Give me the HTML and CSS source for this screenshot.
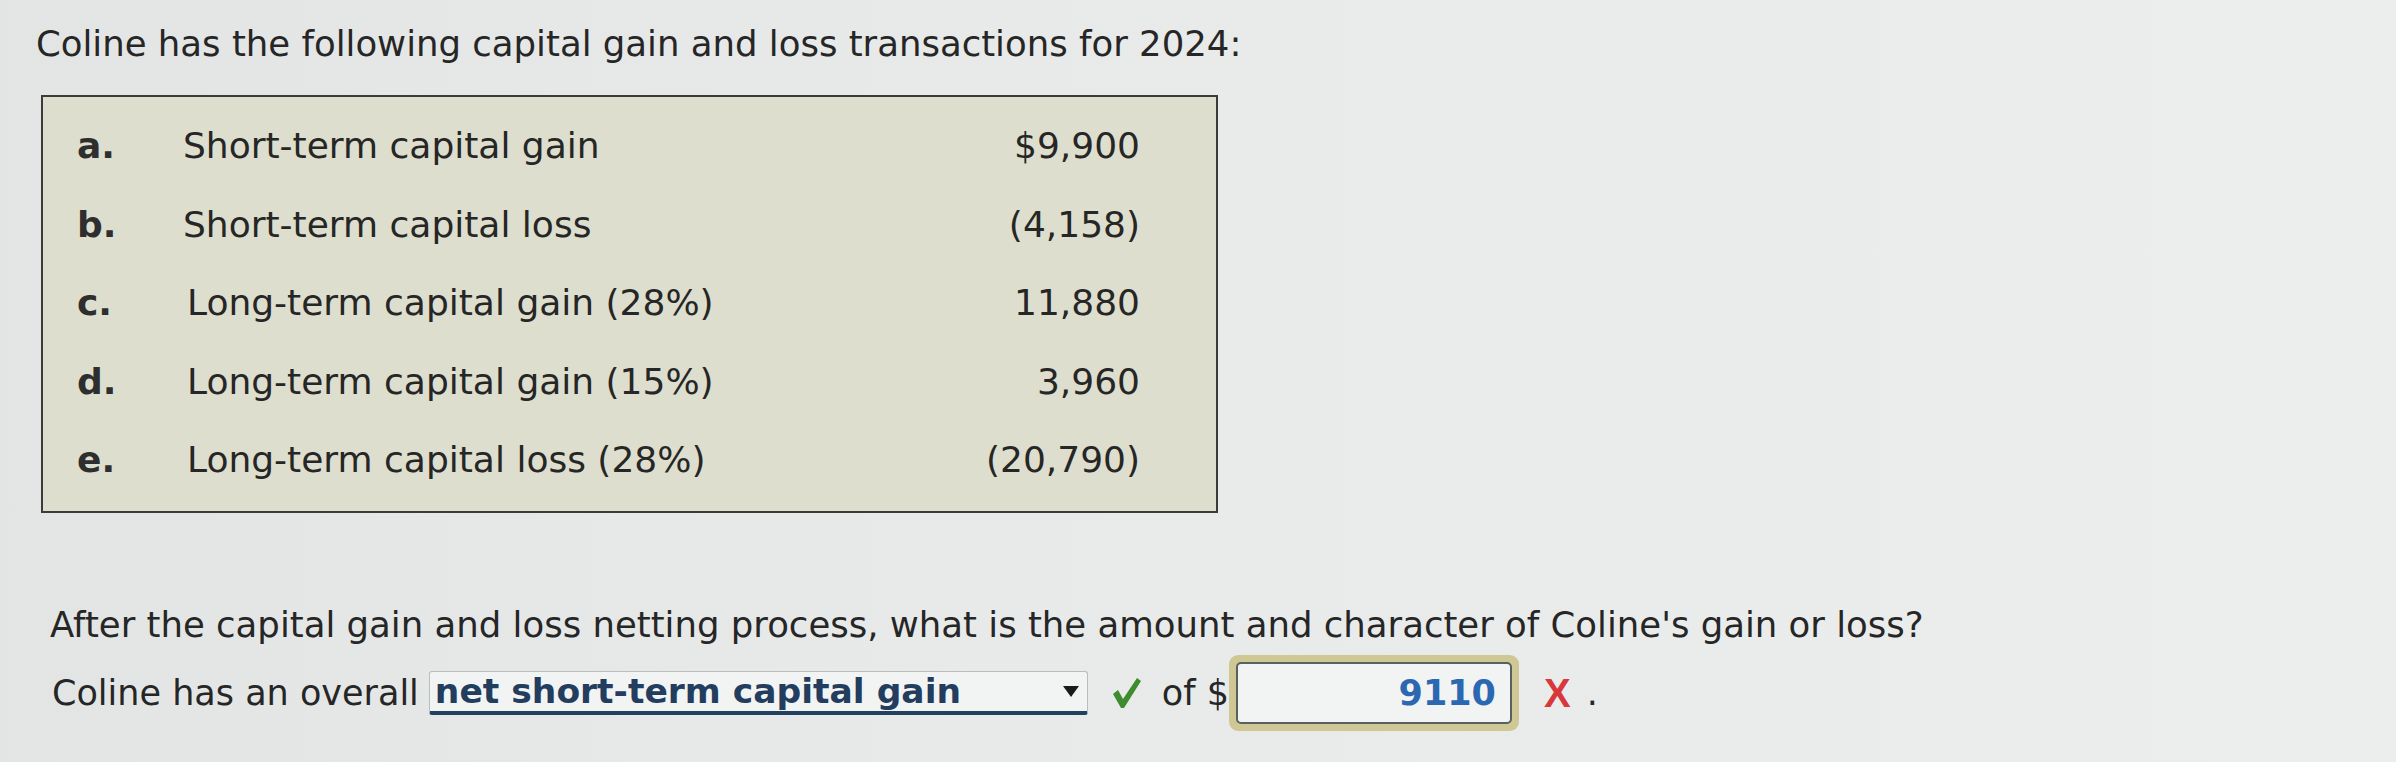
FILE: index.html
```html
<!DOCTYPE html>
<html lang="en">
<head>
<meta charset="utf-8">
<title>Capital gain and loss netting</title>
<link rel="stylesheet" href="styles.css">
</head>
<body>
<main class="page">
  <p class="title">Coline has the following capital gain and loss transactions for 2024:</p>
  <div class="box">
    <div class="row"><span class="lbl">a.</span><span class="desc">Short-term capital gain</span><span class="amt">$9,900</span></div>
    <div class="row"><span class="lbl">b.</span><span class="desc">Short-term capital loss</span><span class="amt">(4,158)</span></div>
    <div class="row"><span class="lbl">c.</span><span class="desc shift">Long-term capital gain (28%)</span><span class="amt">11,880</span></div>
    <div class="row"><span class="lbl">d.</span><span class="desc shift">Long-term capital gain (15%)</span><span class="amt">3,960</span></div>
    <div class="row"><span class="lbl">e.</span><span class="desc shift">Long-term capital loss (28%)</span><span class="amt">(20,790)</span></div>
  </div>
  <p class="question">After the capital gain and loss netting process, what is the amount and character of Coline's gain or loss?</p>
  <div class="answer">
    <span class="lead">Coline has an overall</span>
    <span class="select">
      <span class="sel-text">net short-term capital gain</span>
      <svg class="arrow" width="16" height="11" viewBox="0 0 16 11"><path d="M0 0 H16 L8 11 Z" fill="#1b1b1b"/></svg>
    </span>
    <svg class="check" width="30" height="32" viewBox="0 0 30 32"><path d="M1 17 L6 13 L11 22 L25 1 L29 4 L12 31 L9 31 Z" fill="#3f8c2f"/></svg>
    <span class="of">of $</span>
    <span class="input"><span class="input-inner">9110</span></span>
    <span class="wrong">X</span>
    <span class="dot">.</span>
  </div>
</main>
</body>
</html>
```

FILE: styles.css
```css
html, body {
  margin: 0;
  padding: 0;
}

body {
  width: 2396px;
  height: 762px;
  overflow: hidden;
  background: linear-gradient(90deg, #e3e5e5 0%, #e8eaea 40%, #eceeee 100%);
  font-family: "DejaVu Sans", Verdana, sans-serif;
  font-size: 35.5px;
  color: #262626;
}

.page {
  display: flex;
  flex-direction: column;
  align-items: flex-start;
}

.title {
  margin: 24px 0 0 36px;
  line-height: 40px;
}

.box {
  margin: 31px 0 0 41px;
  width: 1177px;
  box-sizing: border-box;
  border: 2px solid #3b3b38;
  background: #dddecd;
  padding: 10px 76px 11px 34px;
  display: flex;
  flex-direction: column;
  font-size: 36px;
}

.row {
  display: flex;
  height: 78.6px;
  line-height: 78.6px;
  align-items: flex-start;
}

.lbl {
  width: 106px;
  font-weight: bold;
  color: #2e2e2e;
}

.desc {
  flex: 1;
}

.desc.shift {
  padding-left: 4px;
}

.amt {
  text-align: right;
}

.question {
  margin: 92px 0 0 50px;
  line-height: 40px;
}

.answer {
  margin: 10px 0 0 52px;
  height: 76px;
  display: flex;
  align-items: center;
  line-height: 40px;
  white-space: nowrap;
  font-size: 35px;
}

.select {
  margin-left: 10px;
  width: 659px;
  height: 44px;
  box-sizing: border-box;
  display: flex;
  align-items: center;
  justify-content: space-between;
  padding: 0 8px 0 5px;
  background: #f2f3f3;
  border: 1px solid #b9bdbf;
  border-bottom: 4px solid #22405f;
  border-radius: 3px;
}

.sel-text {
  font-weight: bold;
  font-size: 34.5px;
  color: #223d5e;
  line-height: 38px;
}

.arrow {
  display: block;
}

.check {
  margin-left: 24px;
  display: block;
}

.of {
  margin-left: 20px;
}

.input {
  width: 290px;
  height: 76px;
  box-sizing: border-box;
  padding: 7px;
  border-radius: 9px;
  background: #cfc895;
  display: flex;
}

.input-inner {
  flex: 1;
  box-sizing: border-box;
  border: 2px solid #56625f;
  border-radius: 5px;
  background: #f2f3f3;
  display: flex;
  align-items: center;
  justify-content: flex-end;
  padding-right: 14px;
  font-weight: bold;
  color: #2b68b1;
}

.wrong {
  margin-left: 25px;
  font-family: "Liberation Sans", Arial, sans-serif;
  font-weight: bold;
  font-size: 40px;
  color: #d8373b;
}

.dot {
  margin-left: 16px;
}
```
